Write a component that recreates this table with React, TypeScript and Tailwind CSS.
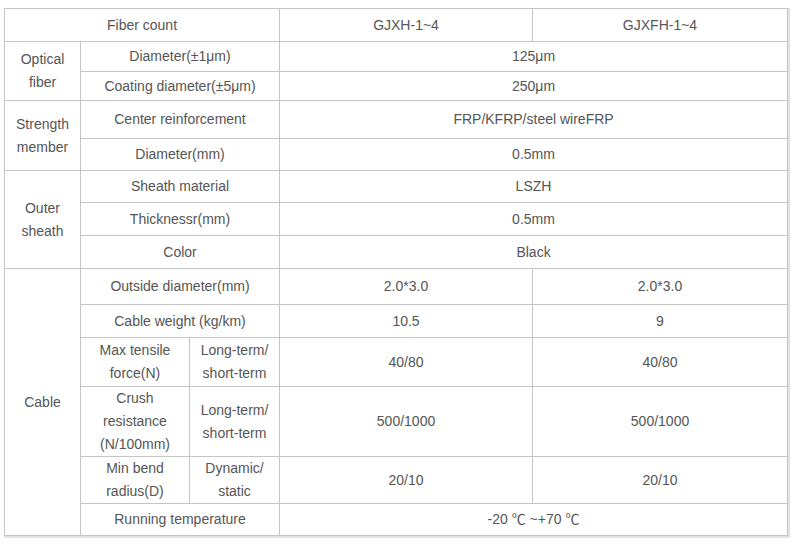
import React from "react";

const cell = "border border-[#c4c4c4] text-center align-middle px-1";

export default function App() {
  return (
    <div className="w-[797px] h-[546px] bg-white pl-[4px] pt-[8px] font-['Liberation_Sans','Noto_Sans_CJK_SC',sans-serif] text-[14px] leading-[23px] text-[#555]">
      <table className="w-[783px] table-fixed border-collapse shadow-[1px_1px_0_1px_#e2e2e2]">
        <colgroup>
          <col className="w-[76px]" />
          <col className="w-[109px]" />
          <col className="w-[90px]" />
          <col className="w-[253px]" />
          <col className="w-[255px]" />
        </colgroup>
        <tbody>
          <tr className="h-[33px]">
            <td className={cell} colSpan={3}>Fiber count</td>
            <td className={cell}>GJXH-1~4</td>
            <td className={cell}>GJXFH-1~4</td>
          </tr>
          <tr className="h-[30px]">
            <td className={cell} rowSpan={2}>Optical<br />fiber</td>
            <td className={cell} colSpan={2}>Diameter(±1μm)</td>
            <td className={cell} colSpan={2}>125μm</td>
          </tr>
          <tr className="h-[29px]">
            <td className={cell} colSpan={2}>Coating diameter(±5μm)</td>
            <td className={cell} colSpan={2}>250μm</td>
          </tr>
          <tr className="h-[38px]">
            <td className={cell} rowSpan={2}>Strength<br />member</td>
            <td className={cell} colSpan={2}>Center reinforcement</td>
            <td className={cell} colSpan={2}>FRP/KFRP/steel wireFRP</td>
          </tr>
          <tr className="h-[32px]">
            <td className={cell} colSpan={2}>Diameter(mm)</td>
            <td className={cell} colSpan={2}>0.5mm</td>
          </tr>
          <tr className="h-[32px]">
            <td className={cell} rowSpan={3}>Outer<br />sheath</td>
            <td className={cell} colSpan={2}>Sheath material</td>
            <td className={cell} colSpan={2}>LSZH</td>
          </tr>
          <tr className="h-[33px]">
            <td className={cell} colSpan={2}>Thicknessr(mm)</td>
            <td className={cell} colSpan={2}>0.5mm</td>
          </tr>
          <tr className="h-[33px]">
            <td className={cell} colSpan={2}>Color</td>
            <td className={cell} colSpan={2}>Black</td>
          </tr>
          <tr className="h-[36px]">
            <td className={cell} rowSpan={6}>Cable</td>
            <td className={cell} colSpan={2}>Outside diameter(mm)</td>
            <td className={cell}>2.0*3.0</td>
            <td className={cell}>2.0*3.0</td>
          </tr>
          <tr className="h-[33px]">
            <td className={cell} colSpan={2}>Cable weight (kg/km)</td>
            <td className={cell}>10.5</td>
            <td className={cell}>9</td>
          </tr>
          <tr className="h-[49px]">
            <td className={cell}>Max tensile<br />force(N)</td>
            <td className={cell}>Long-term/<br />short-term</td>
            <td className={cell}>40/80</td>
            <td className={cell}>40/80</td>
          </tr>
          <tr className="h-[70px]">
            <td className={cell}>Crush<br />resistance<br />(N/100mm)</td>
            <td className={cell}>Long-term/<br />short-term</td>
            <td className={cell}>500/1000</td>
            <td className={cell}>500/1000</td>
          </tr>
          <tr className="h-[47px]">
            <td className={cell}>Min bend<br />radius(D)</td>
            <td className={cell}>Dynamic/<br />static</td>
            <td className={cell}>20/10</td>
            <td className={cell}>20/10</td>
          </tr>
          <tr className="h-[32px]">
            <td className={cell} colSpan={2}>Running temperature</td>
            <td className={cell} colSpan={2}>-20 ℃ ~+70 ℃</td>
          </tr>
        </tbody>
      </table>
    </div>
  );
}
